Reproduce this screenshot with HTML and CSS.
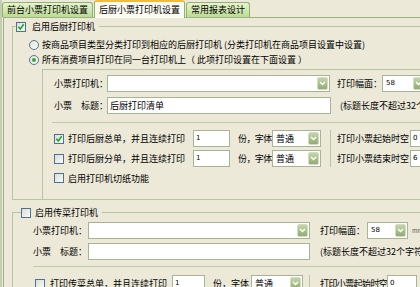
FILE: index.html
```html
<!DOCTYPE html>
<html lang="zh-CN">
<head>
  <meta charset="UTF-8">
  <meta name="viewport" content="width=device-width, initial-scale=1.0">
  <title>后厨小票打印机设置</title>
  <link rel="stylesheet" href="styles.css">
</head>
<body>
  <div class="window">
    <div class="tabs">
      <div class="tab">前台小票打印机设置</div>
      <div class="tab active">后厨小票打印机设置</div>
      <div class="tab">常用报表设计</div>
    </div>

    <div class="panel">
      <!-- 后厨打印机 -->
      <fieldset class="group group-kitchen">
        <legend>
          <span class="cb on"><svg width="8" height="8" viewBox="0 0 8 8"><path d="M1.3 3.8l2 2.1 3.4-4.6" stroke="#22a526" stroke-width="1.6" fill="none"/></svg></span>
          <span>启用后厨打印机</span>
        </legend>
        <div class="radio-row first"><span class="rb"></span>按商品项目类型分类打印到相应的后厨打印机 (分类打印机在商品项目设置中设置)</div>
        <div class="radio-row"><span class="rb on"></span>所有消费项目打印在同一台打印机上（ 此项打印设置在下面设置 ）</div>

        <div class="inner">
          <div class="row">
            <span class="label">小票打印机：</span>
            <div class="combo printer"><span class="val"></span><span class="btn"><svg width="7" height="5" viewBox="0 0 7 5"><path d="M1 1l2.5 2.5L6 1" stroke="#fff" stroke-width="1.5" fill="none"/></svg></span></div>
            <span class="label size-label">打印幅面：</span>
            <div class="combo size"><span class="val num">58</span><span class="btn"><svg width="7" height="5" viewBox="0 0 7 5"><path d="M1 1l2.5 2.5L6 1" stroke="#fff" stroke-width="1.5" fill="none"/></svg></span></div>
          </div>
          <div class="row">
            <span class="label">小票　标题：</span>
            <div class="field title">后厨打印清单</div>
            <span class="hint">(标题长度不超过32个字符)</span>
          </div>

          <div class="sep"></div>

          <div class="opts">
            <div class="opt-main">
              <div class="opt-row">
                <span class="cb on"><svg width="8" height="8" viewBox="0 0 8 8"><path d="M1.3 3.8l2 2.1 3.4-4.6" stroke="#22a526" stroke-width="1.6" fill="none"/></svg></span>
                <span class="opt-text">打印后厨总单，并且连续打印</span>
                <div class="field copies num">1</div>
                <span class="unit">份，字体</span>
                <div class="combo font"><span class="val">普通</span><span class="btn"><svg width="7" height="5" viewBox="0 0 7 5"><path d="M1 1l2.5 2.5L6 1" stroke="#fff" stroke-width="1.5" fill="none"/></svg></span></div>
              </div>
              <div class="opt-row">
                <span class="cb"></span>
                <span class="opt-text">打印后厨分单，并且连续打印</span>
                <div class="field copies num">1</div>
                <span class="unit">份，字体</span>
                <div class="combo font"><span class="val">普通</span><span class="btn"><svg width="7" height="5" viewBox="0 0 7 5"><path d="M1 1l2.5 2.5L6 1" stroke="#fff" stroke-width="1.5" fill="none"/></svg></span></div>
              </div>
            </div>
            <div class="opt-time">
              <div class="opt-row"><span class="time-label">打印小票起始时空</span><div class="field time num">0</div></div>
              <div class="opt-row"><span class="time-label">打印小票结束时空</span><div class="field time num">6</div></div>
            </div>
          </div>

          <div class="check-row"><span class="cb"></span><span class="opt-text">启用打印机切纸功能</span></div>
        </div>
      </fieldset>

      <!-- 传菜打印机 -->
      <fieldset class="group group-runner">
        <legend>
          <span class="cb"></span>
          <span>启用传菜打印机</span>
        </legend>
        <div class="row">
          <span class="label">小票打印机：</span>
          <div class="combo printer"><span class="val"></span><span class="btn"><svg width="7" height="5" viewBox="0 0 7 5"><path d="M1 1l2.5 2.5L6 1" stroke="#fff" stroke-width="1.5" fill="none"/></svg></span></div>
          <span class="label size-label">打印幅面：</span>
          <div class="combo size"><span class="val num">58</span><span class="btn"><svg width="7" height="5" viewBox="0 0 7 5"><path d="M1 1l2.5 2.5L6 1" stroke="#fff" stroke-width="1.5" fill="none"/></svg></span></div>
          <span class="mm">mm</span>
        </div>
        <div class="row">
          <span class="label">小票　标题：</span>
          <div class="field title"></div>
          <span class="hint">(标题长度不超过32个字符)</span>
        </div>

        <div class="sep"></div>

        <div class="opts">
          <div class="opt-main">
            <div class="opt-row">
              <span class="cb"></span>
              <span class="opt-text">打印传菜总单，并且连续打印</span>
              <div class="field copies num">1</div>
              <span class="unit">份，字体</span>
              <div class="combo font"><span class="val">普通</span><span class="btn"><svg width="7" height="5" viewBox="0 0 7 5"><path d="M1 1l2.5 2.5L6 1" stroke="#fff" stroke-width="1.5" fill="none"/></svg></span></div>
            </div>
          </div>
          <div class="opt-time">
            <div class="opt-row"><span class="time-label">打印小票起始时空</span><div class="field time num">0</div></div>
          </div>
        </div>
      </fieldset>
    </div>
  </div>
</body>
</html>
```

FILE: styles.css
```css
* {
  box-sizing: border-box;
}
body {
  margin: 0;
  width: 420px;
  height: 287px;
  overflow: hidden;
  background: #ece9d8;
  font-family: "Noto Sans CJK SC", sans-serif;
  font-size: 9px;
  line-height: 13px;
  color: #000;
}
.window {
  width: 480px;
  height: 287px;
  border-left: 2px solid #c6cbb4;
}

/* tabs */
.tabs {
  display: flex;
  align-items: flex-end;
  height: 17px;
}
.tab {
  position: relative;
  height: 15px;
  padding: 0 4px;
  margin-right: 1px;
  border: 1px solid #8fb270;
  border-bottom: none;
  border-radius: 3px 3px 0 0;
  background: linear-gradient(#e8f4d0, #bcdb92);
  line-height: 14px;
  white-space: nowrap;
}
.tab.active {
  z-index: 1;
  height: 18px;
  margin-bottom: -1px;
  border-top: 2px solid #f3bb3c;
  background: #fbfbf2;
  line-height: 15px;
}

.panel {
  height: 270px;
  margin-left: 1px;
  border-left: 1px solid #9cb482;
  border-top: 1px solid #9cb482;
}

/* group boxes */
.group {
  min-width: 0;
  margin: 2px 0 0 8px;
  padding: 0;
  border: 1px solid #b7c5a1;
  border-right: none;
}
.group legend {
  display: flex;
  align-items: center;
  gap: 6px;
  margin-left: 3px;
  padding: 0 4px 0 0;
  line-height: 13px;
}
.group-runner {
  margin-top: 6px;
  border-bottom: none;
}
.group-runner legend {
  margin-left: 8px;
  gap: 4px;
}

.radio-row {
  display: flex;
  align-items: center;
  gap: 3px;
  height: 15px;
  padding-left: 16px;
  white-space: nowrap;
}
.radio-row.first {
  margin-top: 4px;
}

.inner {
  margin: 2px 0 0 29px;
  padding-bottom: 14px;
  border-top: 1px solid #b7c5a1;
  border-left: 1px solid #b7c5a1;
}

/* rows */
.row {
  display: flex;
  align-items: center;
  height: 17px;
  margin-top: 5px;
  white-space: nowrap;
}
.label {
  flex: none;
  white-space: nowrap;
}
.group-kitchen .row {
  padding-left: 11px;
}
.group-kitchen .label {
  width: 53px;
}
.group-kitchen .printer {
  width: 223px;
}
.group-kitchen .title {
  width: 224px;
}
.group-kitchen .size-label {
  width: 45px;
  margin-left: 7px;
}
.group-kitchen .size {
  width: 44px;
}
.group-kitchen .hint {
  margin-left: 9px;
}

.group-runner .row {
  padding-left: 20px;
  margin-top: 4px;
}
.group-runner .row:first-of-type {
  margin-top: 3px;
}
.group-runner .label {
  width: 55px;
}
.group-runner .printer,
.group-runner .title {
  width: 222px;
}
.group-runner .size-label {
  width: 47px;
  margin-left: 10px;
}
.group-runner .size {
  width: 41px;
}
.group-runner .hint {
  margin-left: 10px;
}
.mm {
  margin-left: 4px;
  font-size: 6px;
  color: #555;
}

/* inputs */
.combo {
  flex: none;
  display: flex;
  height: 17px;
  padding: 1px;
  border: 1px solid #a6b596;
  background: #fff;
}
.combo .val {
  flex: 1;
  padding-left: 2px;
  line-height: 13px;
  overflow: hidden;
}
.combo .btn {
  flex: none;
  display: flex;
  align-items: center;
  justify-content: center;
  width: 11px;
  border: 1px solid #d2dcc0;
  border-radius: 2px;
  background: linear-gradient(#c3d5a8, #93ab72);
}
.field {
  flex: none;
  height: 17px;
  padding: 0 2px;
  border: 1px solid #a6b596;
  background: #fff;
  line-height: 15px;
  overflow: hidden;
  white-space: nowrap;
}
.num {
  font-family: "DejaVu Sans", sans-serif;
  font-size: 7px;
}

.sep {
  height: 1px;
  margin: 8px 0 0 9px;
  background: #bfcaa9;
}
.group-runner .sep {
  margin: 6px 0 0 20px;
}

/* checkboxes / radios */
.cb {
  flex: none;
  display: flex;
  align-items: center;
  justify-content: center;
  width: 10px;
  height: 10px;
  border: 1px solid #4d7298;
  background: linear-gradient(135deg, #dcdcd4, #fbfbf8);
}
.rb {
  flex: none;
  display: flex;
  align-items: center;
  justify-content: center;
  width: 10px;
  height: 10px;
  border: 1px solid #557898;
  border-radius: 50%;
  background: linear-gradient(135deg, #e2e2da, #fcfcf9);
}
.rb.on::after {
  content: "";
  width: 4px;
  height: 4px;
  border-radius: 50%;
  background: #3aa43a;
}

/* option rows */
.opts {
  display: flex;
  margin-top: 7px;
  padding-left: 11px;
}
.opt-main,
.opt-time {
  display: flex;
  flex-direction: column;
  gap: 3px;
}
.opt-row {
  display: flex;
  align-items: center;
  height: 17px;
  white-space: nowrap;
}
.opt-text {
  flex: none;
  margin-left: 4px;
}
.group-kitchen .opt-text {
  width: 125px;
}
.copies {
  width: 37px;
}
.unit {
  flex: none;
  width: 34px;
  margin-left: 8px;
  letter-spacing: -0.6px;
}
.font {
  width: 49px;
}
.opt-time {
  margin-left: 9px;
  padding-left: 6px;
  border-left: 1px solid #b7c5a1;
}
.time-label {
  flex: none;
  width: 73px;
}
.time {
  width: 30px;
}
.check-row {
  display: flex;
  align-items: center;
  height: 14px;
  margin-top: 4px;
  padding-left: 11px;
}

.group-runner .opts {
  margin-top: 8px;
  padding-left: 22px;
}
.group-runner .opt-text {
  width: 122px;
  margin-left: 5px;
}
.group-runner .copies {
  width: 33px;
}
.group-runner .unit {
  width: 38px;
  letter-spacing: 0;
}
.group-runner .font {
  width: 52px;
}
.group-runner .opt-time {
  margin-left: 6px;
  padding-left: 10px;
}
.group-runner .time-label {
  width: 67px;
  letter-spacing: -0.6px;
}
```
